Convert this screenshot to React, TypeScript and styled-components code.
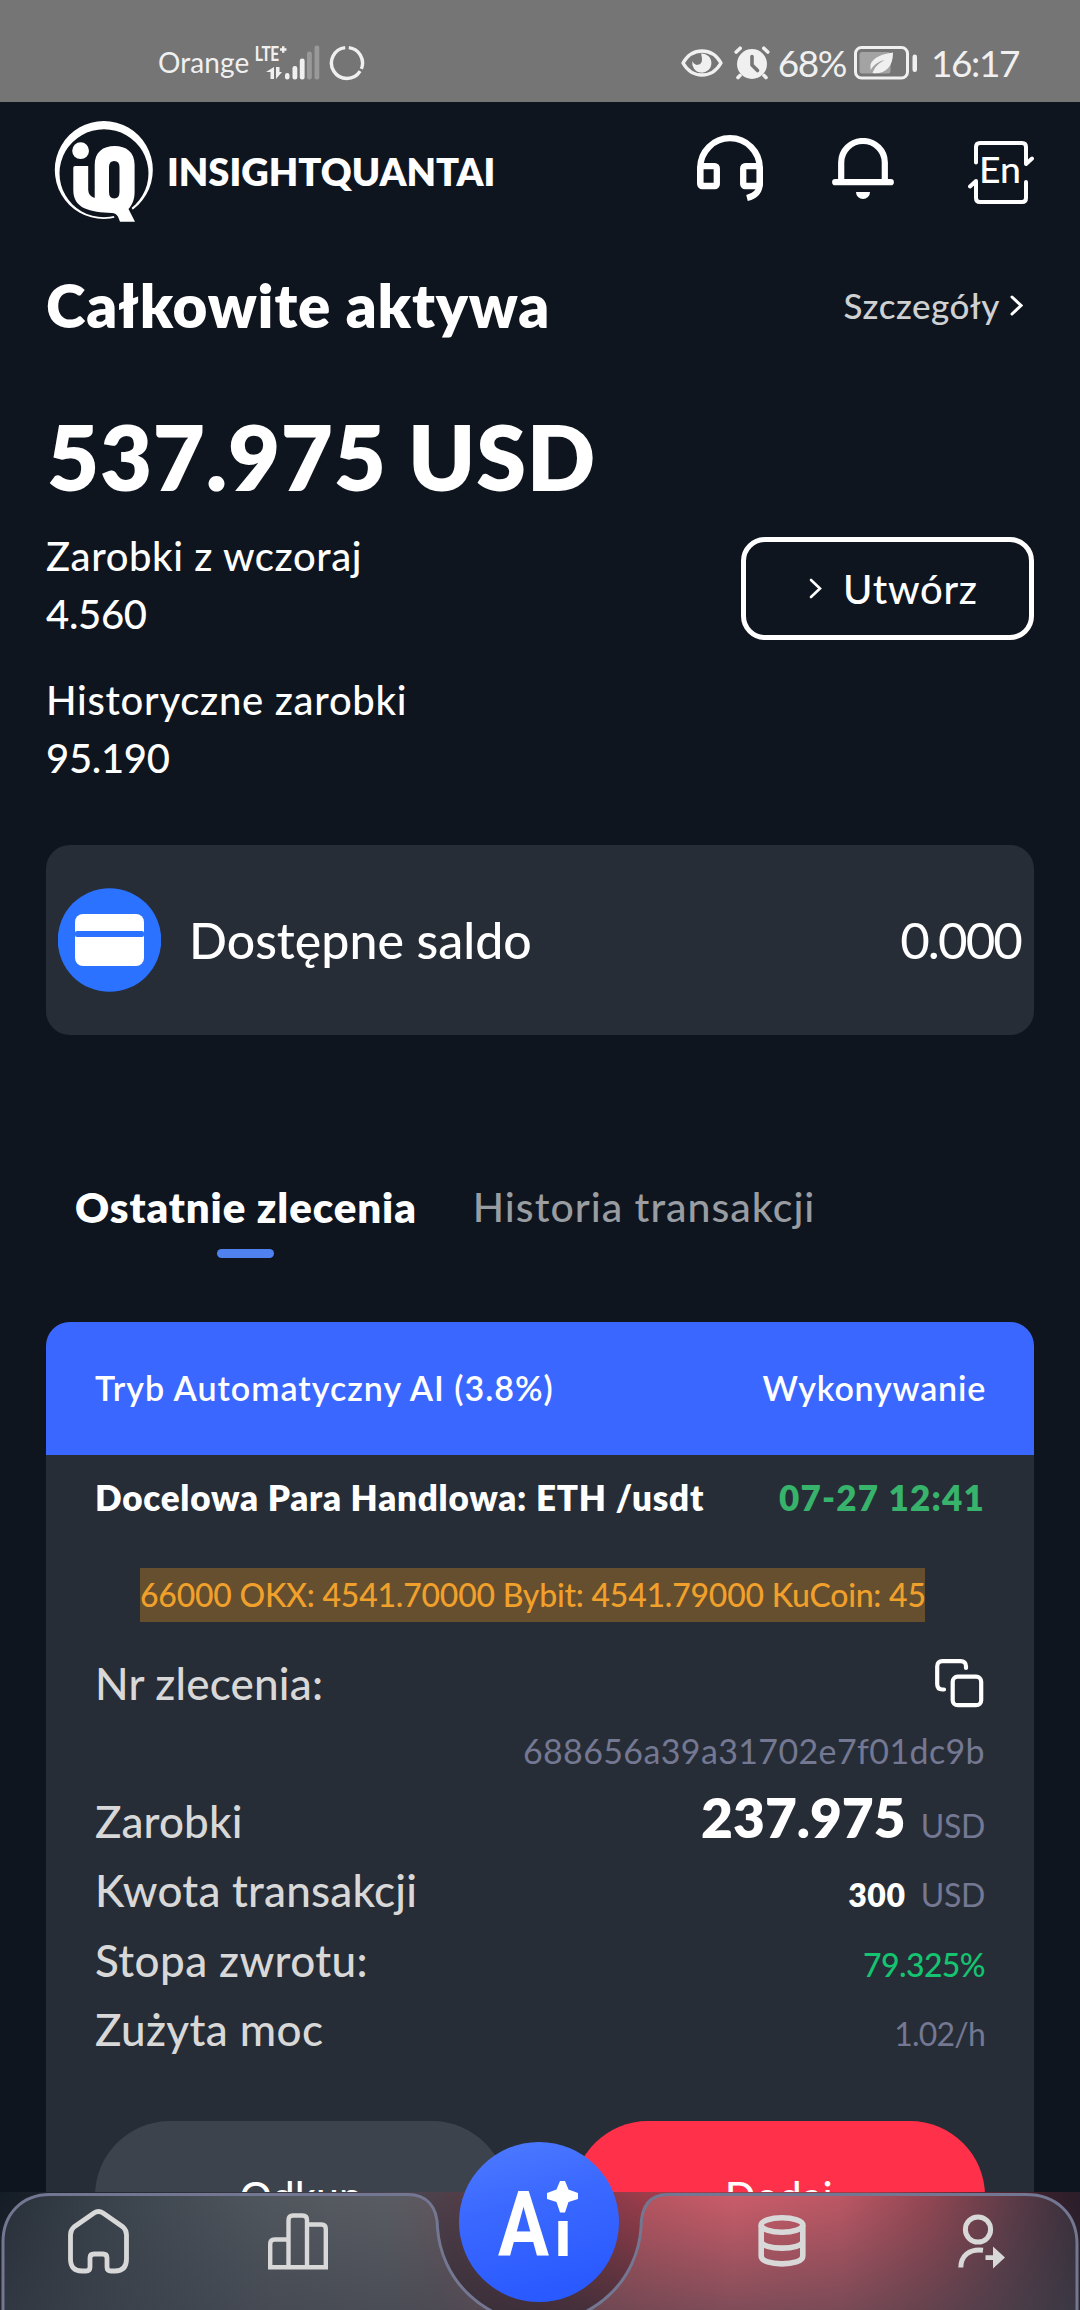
import React from "react";
import styled, { createGlobalStyle } from "styled-components";

const colors = {
  page: "#0e151f",
  card: "#272d36",
  text: "#ffffff",
  label: "#d8d8d8",
  muted: "#747893",
  status: "#f0f0f0",
  blue: "#3a67ff",
  red: "#ff314a",
};

const GlobalStyle = createGlobalStyle`
  *, *::before, *::after { box-sizing: border-box; }
  body { margin: 0; background: ${colors.page}; }
  svg { display: block; flex: none; }
`;

const Screen = styled.div`
  position: relative;
  width: 1080px;
  height: 2310px;
  overflow: hidden;
  background: ${colors.page};
  color: ${colors.text};
  font-family: Lato, "Noto Sans", sans-serif;
  white-space: nowrap;
`;

const Text = styled.span<{
  $size: number;
  $weight?: number;
  $spacing?: number;
  $color?: string;
}>`
  font-size: ${(p) => p.$size}px;
  font-weight: ${(p) => p.$weight ?? 500};
  letter-spacing: ${(p) => p.$spacing ?? 0}px;
  color: ${(p) => p.$color ?? colors.text};
  line-height: 1.2;
`;

/* ---------- status bar ---------- */

const StatusBar = styled.div`
  display: flex;
  justify-content: space-between;
  height: 102px;
  padding: 24px 61px 0 158px;
  background: #757575;
`;

const StatusGroup = styled.div<{ $gap: number }>`
  display: flex;
  align-items: center;
  height: 78px;
  gap: ${(p) => p.$gap}px;
`;

const StatusNumber = styled(Text)`
  padding-top: 1px;
`;

const SignalSlot = styled.div`
  margin-top: -12px;
`;

const AlarmSlot = styled.div`
  margin: 0 8px 0 11px;
`;

const BatterySlot = styled.div`
  margin: 0 13px 0 8px;
`;

/* ---------- header ---------- */

const Header = styled.header`
  display: flex;
  align-items: center;
  justify-content: space-between;
  height: 140px;
  padding: 0 51px 0 54px;
`;

const Brand = styled.div`
  display: flex;
  align-items: center;
  gap: 9px;
`;

const HeaderActions = styled.div`
  display: grid;
  grid-template-columns: 66px 62px 66px;
  align-items: center;
  column-gap: 69px;
  padding-bottom: 7px;

  svg:last-child {
    margin: 8px 0 0 5px;
  }
`;

/* ---------- summary ---------- */

const Content = styled.main`
  display: flex;
  flex-direction: column;
  padding: 0 46px;
`;

const TitleRow = styled.div`
  display: flex;
  align-items: center;
  justify-content: space-between;
  height: 124px;
  padding: 2px 11px 0 0;
`;

const DetailsLink = styled.div`
  display: flex;
  align-items: center;
  gap: 10px;
`;

const Amount = styled.div`
  display: flex;
  align-items: center;
  height: 110px;
  margin-top: 35px;
  padding: 0 0 0 1px;
`;

const StatsRow = styled.div`
  display: flex;
  justify-content: space-between;
  align-items: flex-start;
  height: 260px;
  margin-top: 15px;
`;

const Stats = styled.div`
  display: flex;
  flex-direction: column;
  gap: 28px;
  padding-top: 1px;
`;

const Stat = styled.div`
  display: flex;
  flex-direction: column;

  ${Text} {
    line-height: 58px;
  }
`;

const CreateButton = styled.button`
  display: flex;
  align-items: center;
  gap: 21px;
  width: 293px;
  height: 103px;
  margin: 11px 0 0;
  padding: 0 0 0 63px;
  border: 5px solid #fff;
  border-radius: 24px;
  background: none;
  font-family: inherit;
`;

const BalanceCard = styled.section`
  display: flex;
  align-items: center;
  height: 190px;
  margin-top: 59px;
  padding: 0 13px 0 12px;
  border-radius: 24px;
  background: ${colors.card};
`;

const BalanceLabel = styled(Text)`
  flex: 1;
  margin-left: 28px;
`;

/* ---------- tabs ---------- */

const Tabs = styled.nav`
  display: flex;
  gap: 56px;
  height: 82px;
  margin-top: 141px;
  padding-left: 29px;
`;

const Tab = styled.div<{ $active?: boolean }>`
  display: flex;
  flex-direction: column;
  align-items: center;

  ${Text} {
    line-height: 62px;
  }

  &::after {
    content: "";
    width: 57px;
    height: 9px;
    margin-top: 11px;
    border-radius: 5px;
    background: ${(p) => (p.$active ? "#4f82ef" : "transparent")};
  }
`;

/* ---------- order card ---------- */

const OrderCard = styled.article`
  display: flex;
  flex-direction: column;
  height: 1040px;
  margin-top: 64px;
  border-radius: 24px;
  background: ${colors.card};
  overflow: hidden;
`;

const OrderHeader = styled.div`
  display: flex;
  align-items: center;
  justify-content: space-between;
  height: 133px;
  padding: 0 48px 0 49px;
  background: ${colors.blue};
`;

const PairRow = styled.div`
  display: flex;
  align-items: center;
  justify-content: space-between;
  height: 84px;
  padding: 0 49px;
`;

const Ticker = styled.div`
  width: 785px;
  height: 54px;
  margin: 29px 0 0 94px;
  background: #654f2e;
  overflow: hidden;

  ${Text} {
    line-height: 53px;
  }
`;

const NumberRow = styled.div`
  display: flex;
  align-items: center;
  justify-content: space-between;
  height: 60px;
  margin-top: 31px;
  padding: 0 50px 0 49px;
`;

const OrderId = styled.div`
  display: flex;
  align-items: center;
  justify-content: flex-end;
  height: 73.5px;
  padding: 4px 49px 0;
`;

const DataRow = styled.div`
  display: flex;
  align-items: baseline;
  justify-content: space-between;
  height: 69.5px;
  padding: 0 49px;

  > ${Text}:first-child {
    line-height: 69.5px;
  }
`;

const Value = styled.div`
  display: flex;
  align-items: baseline;
  gap: 15px;

  ${Text} {
    line-height: 1;
  }
`;

const Actions = styled.div`
  display: flex;
  gap: 66px;
  margin-top: 56.5px;
  padding: 0 49px;
`;

const ActionButton = styled.button<{ $bg: string }>`
  flex: 1;
  height: 150px;
  padding: 0;
  border: 0;
  border-radius: 75px;
  background: ${(p) => p.$bg};
  font-family: inherit;
`;

/* ---------- bottom navigation ---------- */

const BottomNav = styled.nav`
  position: absolute;
  left: 0;
  bottom: 0;
  width: 1080px;
  height: 118px;
`;

const NavBackdrop = styled.svg`
  position: absolute;
  inset: 0;
`;

const NavItems = styled.div`
  position: relative;
  display: grid;
  grid-template-columns: 197px 202px 280px 206px 193px;
  grid-template-rows: 98px;
  align-items: center;
  justify-items: center;
`;

const AiButton = styled.div`
  display: flex;
  width: 160px;
  height: 160px;
  margin-top: -38px;
  border-radius: 50%;
  background: linear-gradient(165deg, #4f7bff 0%, #3a68ff 40%, #2556ff 100%);
`;

/* ---------- icons ---------- */

const SignalIcon = () => (
  <svg width="68" height="48" viewBox="0 -12 68 48" fill={colors.status}>
    <text x="0" y="16" fontSize="21" fontWeight="700" fontFamily="Roboto, sans-serif" textLength="24" lengthAdjust="spacingAndGlyphs">LTE</text>
    <path d="M25 4.500h6.500M28.200 1.200v6.600" stroke={colors.status} strokeWidth="2.400" />
    <path d="M19 22v12h-3.500v-7h-4.500z M21 22v12l6-7h-2.500v-5z" />
    <rect x="30" y="28" width="4.500" height="6.500" rx="2.200" />
    <rect x="37.500" y="21" width="4.800" height="13.500" rx="2.200" />
    <rect x="44.800" y="13.500" width="4.800" height="21" rx="2.200" />
    <rect x="52" y="6.500" width="4.800" height="28" rx="2.200" opacity=".3" />
    <rect x="59.500" y="0.500" width="4.800" height="34" rx="2.200" opacity=".3" />
  </svg>
);

const RingIcon = () => (
  <svg width="36" height="36" viewBox="-18 -18 36 36" fill="none" stroke={colors.status} strokeWidth="3.400">
    <path d="M1.800 -15.400A15.500 15.500 0 0 1 14.400 5.800M13.100 8.200A15.500 15.500 0 1 1 -1.800 -15.400" />
  </svg>
);

const EyeIcon = () => (
  <svg width="42" height="28" viewBox="0 0 42 28">
    <path d="M2 14C6 7 13 2 21 2s15 5 19 12c-4 7-11 12-19 12S6 21 2 14Z" fill="none" stroke={colors.status} strokeWidth="3.400" strokeLinejoin="round" />
    <path d="M20 4.500a9.600 9.600 0 1 1-8.600 7.600c1 2.600 3.200 4.200 5.400 3.700c3-.6 4.400-2.600 4.200-5.600c-.1-2.400-.5-4.200-1-5.700Z" fill={colors.status} />
  </svg>
);

const AlarmIcon = () => (
  <svg width="36" height="34" viewBox="0 0 36 34" fill="none" stroke={colors.status} strokeLinecap="round">
    <circle cx="18" cy="18" r="15" fill={colors.status} stroke="none" />
    <path d="M2.200 6l4-3.800M33.800 6l-4-3.800M6 29.500l-2 2M30 29.500l2 2" strokeWidth="3.600" />
    <path d="M18 10.500v8.500l5.500 5.500" stroke="#757575" strokeWidth="3.600" strokeLinejoin="round" />
  </svg>
);

const BatteryIcon = () => (
  <svg width="64" height="34" viewBox="0 0 64 34">
    <rect x="1.500" y="1.500" width="52" height="30.500" rx="6" fill="none" stroke={colors.status} strokeWidth="3" />
    <rect x="5.500" y="6" width="31" height="21.500" rx="2.500" fill="#a3a3a3" />
    <rect x="58.500" y="8.500" width="4.500" height="17.500" rx="2.200" fill={colors.status} />
    <path d="M39 6.500c-11 1.500-20 5-22.500 12v5.500c4-6 8.500-8.500 14-10c-5.500 3-9.500 6.500-12 13c12 1.500 20.500-5 20.500-20.500Z" fill={colors.status} />
  </svg>
);

const LogoIcon = () => (
  <svg width="104" height="104" viewBox="0 0 104 104" fill="#fff" fillRule="evenodd">
    <path d="M49.800 1a49 49 0 1 0 .01 0ZM50 9.300a44.500 44 0 1 1-.01 0Z" />
    <path d="M60 88h15l9 14H64Z" fill={colors.page} stroke={colors.page} strokeWidth="4.500" />
    <circle cx="26.600" cy="30.700" r="8.400" />
    <path d="M21 46H34.200V70Q34.500 76 40.700 78V45C40.700 32 49 26 60.600 26S80.600 32 80.600 45V72C80.600 80 78 85 74.500 89L81 101.700H66C64 96 63 93.500 58 93C36 92 19.300 89 19.300 70V47.700Q19.300 46 21 46ZM60.200 41Q55 41 55 47V72Q55 78.500 60.200 78.500T65.500 72V47Q65.500 41 60.200 41Z" />
  </svg>
);

const HeadsetIcon = () => (
  <svg width="66" height="67" viewBox="0 0 66 67" fill="none" stroke="#fff" strokeWidth="6.300">
    <path d="M3.200 48V33A29.800 29.800 0 0 1 62.800 33V48" />
    <rect x="3.200" y="31.200" width="16.600" height="19.800" rx="2" />
    <rect x="46.200" y="31.200" width="16.600" height="19.800" rx="2" />
    <path d="M62.800 48C62.800 57 58 61 50 63" />
  </svg>
);

const BellIcon = () => (
  <svg width="62" height="62" viewBox="0 0 62 62" fill="none" stroke="#fff" strokeWidth="6.200" strokeLinecap="round">
    <path d="M9.200 44V24.500A21.800 21.500 0 0 1 52.800 24.500V44M3.200 44.200H58.800" />
    <path d="M24 54H38A7 7 0 0 1 24 54Z" fill="#fff" stroke="none" />
  </svg>
);

const LanguageIcon = () => (
  <svg width="66" height="64" viewBox="0 0 66 64" fill="none" stroke="#fff" strokeWidth="4" strokeLinecap="round" strokeLinejoin="round">
    <path d="M8 21.500V6Q8 2 12 2H54Q58 2 58 6V23L64 17.500" />
    <path d="M58 41V57Q58 61 54 61H12Q8 61 8 57V40L2 45.500" />
    <text x="11" y="42" fontSize="37" fontWeight="500" fill="#fff" stroke="none" textLength="42" lengthAdjust="spacingAndGlyphs">En</text>
  </svg>
);

const Chevron = ({ width, height, stroke = 3 }: { width: number; height: number; stroke?: number }) => (
  <svg width={width} height={height} viewBox={`0 0 ${width} ${height}`} fill="none" stroke="#fff" strokeWidth={stroke} strokeLinecap="round">
    <path d={`M2 2L${width - 2} ${height / 2}L2 ${height - 2}`} />
  </svg>
);

const WalletIcon = () => (
  <svg width="103" height="104" viewBox="0 0 103 104">
    <circle cx="51.500" cy="52" r="51.800" fill="#2a72ff" />
    <rect x="17" y="26" width="69" height="52" rx="8" fill="#fff" />
    <rect x="17" y="43" width="69" height="6" rx="2" fill="#2a72ff" />
  </svg>
);

const CopyIcon = () => (
  <svg width="49" height="49" viewBox="0 0 49 49" fill="none" stroke="#fff" strokeWidth="4.200" strokeLinecap="round">
    <path d="M31 9V7.500Q31 2.200 25.500 2.200H7.500Q2.200 2.200 2.200 7.500V25Q2.200 30.500 7.500 30.500H9" />
    <rect x="17.700" y="17.700" width="28.500" height="28.500" rx="5" />
  </svg>
);

const HomeIcon = () => (
  <svg width="61" height="65" viewBox="0 0 61 65" fill="none" stroke={colors.label} strokeWidth="4.800">
    <path d="M26 4Q30.500 1 35 4L55 18Q58.500 21 58.500 26V50Q58.500 62 47 62H43Q39 62 39 58V49Q39 45 35 45H26Q22 45 22 49V58Q22 62 18 62H14Q2.500 62 2.500 50V26Q2.500 21 6 18Z" />
  </svg>
);

const ChartIcon = () => (
  <svg width="60" height="57" viewBox="0 0 60 57" fill="none" stroke={colors.label} strokeWidth="4.400">
    <path d="M2.200 54.300V31Q2.200 26.500 6.500 26.500H20.500M20.500 54.300V7Q20.500 2.500 25 2.500H34.500Q39 2.500 39 7V54.300M39 11.500H53.500Q57.800 11.500 57.800 16V54.300M0 54.300H60" />
  </svg>
);

const DatabaseIcon = () => (
  <svg width="48" height="52" viewBox="0 0 48 52" fill="none" stroke={colors.label} strokeWidth="5.600">
    <ellipse cx="24" cy="10" rx="20.800" ry="7.200" />
    <path d="M3.200 10V41C3.200 51.500 44.800 51.500 44.800 41V10M3.200 26C3.200 35.500 44.800 35.500 44.800 26" />
  </svg>
);

const UserIcon = () => (
  <svg width="48" height="55" viewBox="0 0 48 55" fill="none" stroke={colors.label} strokeWidth="5">
    <circle cx="20" cy="15.500" r="12.600" />
    <path d="M2.800 53.500C3 42 11 34.500 25 36.200" />
    <path d="M27.500 41.200H35V32.500L47 43.500L35 54.500V46H27.500Z" fill={colors.label} stroke="none" />
  </svg>
);

const AiIcon = () => (
  <svg width="160" height="160" viewBox="0 0 160 160" fill="#fff">
    <text x="39" y="114" fontSize="90" fontWeight="700" fontFamily="Roboto, sans-serif" textLength="51" lengthAdjust="spacingAndGlyphs">A</text>
    <text x="95" y="114" fontSize="66" fontWeight="700" fontFamily="Roboto, sans-serif">ı</text>
    <path d="M101 39h5l3.500 8.500 9.500 3.500v6l-9.500 3-3.500 10.500h-5l-3.500-10.500-9.500-3v-6l9.500-3.500z" />
  </svg>
);

const navShape =
  "M3 122V50C3 22 22 2.500 50 2.500H408C426 2.500 437.500 14 437.500 36A102 102 0 0 0 641 36C641 14 650 2.500 668 2.500H1026C1056 2.500 1077 22 1077 52V122Z";

const NavSurface = () => (
  <NavBackdrop width="1080" height="118" viewBox="0 0 1080 118">
    <defs>
      <linearGradient id="base">
        <stop offset="0" stopColor="#141c26" />
        <stop offset=".05" stopColor="#1c242e" />
        <stop offset=".38" stopColor="#4b4550" />
        <stop offset=".42" stopColor="#513e48" />
        <stop offset=".5" stopColor="#6c3a46" />
        <stop offset=".6" stopColor="#a03d4b" />
        <stop offset=".8" stopColor="#a03c48" />
        <stop offset=".97" stopColor="#371f2c" />
        <stop offset="1" stopColor="#2b1d29" />
      </linearGradient>
      <linearGradient id="surface">
        <stop offset="0" stopColor="#28303a" />
        <stop offset=".1" stopColor="#3a434c" />
        <stop offset=".25" stopColor="#51575e" />
        <stop offset=".36" stopColor="#5a5c63" />
        <stop offset=".41" stopColor="#61565e" />
        <stop offset=".59" stopColor="#b5545f" />
        <stop offset=".68" stopColor="#cb5c69" />
        <stop offset=".78" stopColor="#bd5764" />
        <stop offset=".86" stopColor="#934753" />
        <stop offset=".94" stopColor="#5c3b47" />
        <stop offset="1" stopColor="#382f3b" />
      </linearGradient>
      <linearGradient id="shadeBase" x2="0" y2="1">
        <stop offset="0" stopColor="#2e2b35" stopOpacity="0" />
        <stop offset="1" stopColor="#2e2b35" stopOpacity=".72" />
      </linearGradient>
      <linearGradient id="shadeSurface" x2="0" y2="1">
        <stop offset="0" stopColor="#3b3f4a" stopOpacity="0" />
        <stop offset="1" stopColor="#3b3f4a" stopOpacity=".58" />
      </linearGradient>
    </defs>
    <rect width="1080" height="118" fill="url(#base)" />
    <rect width="1080" height="118" fill="url(#shadeBase)" />
    <path d={navShape} fill="url(#surface)" />
    <path d={navShape} fill="url(#shadeSurface)" stroke="#747792" strokeWidth="3" />
  </NavBackdrop>
);

export default function App() {
  return (
    <Screen>
      <GlobalStyle />
      <StatusBar>
        <StatusGroup $gap={6}>
          <Text $size={28} $weight={400} $color={colors.status} $spacing={0.1}>Orange</Text>
          <SignalSlot>
            <SignalIcon />
          </SignalSlot>
          <RingIcon />
        </StatusGroup>
        <StatusGroup $gap={0}>
          <EyeIcon />
          <AlarmSlot>
            <AlarmIcon />
          </AlarmSlot>
          <StatusNumber $size={37} $weight={400} $color={colors.status} $spacing={-1.5}>68%</StatusNumber>
          <BatterySlot>
            <BatteryIcon />
          </BatterySlot>
          <StatusNumber $size={37} $weight={400} $color={colors.status} $spacing={-1.4}>16:17</StatusNumber>
        </StatusGroup>
      </StatusBar>

      <Header>
        <Brand>
          <LogoIcon />
          <Text $size={38} $weight={800}>INSIGHTQUANTAI</Text>
        </Brand>
        <HeaderActions>
          <HeadsetIcon />
          <BellIcon />
          <LanguageIcon />
        </HeaderActions>
      </Header>

      <Content>
        <TitleRow>
          <Text $size={60} $weight={800} $spacing={0.8}>Całkowite aktywa</Text>
          <DetailsLink>
            <Text $size={35} $spacing={0.5} $color="#cfd0d2">Szczegóły</Text>
            <Chevron width={13} height={21} />
          </DetailsLink>
        </TitleRow>

        <Amount>
          <Text $size={90} $weight={800} $spacing={0.7}>537.975 USD</Text>
        </Amount>

        <StatsRow>
          <Stats>
            <Stat>
              <Text $size={40} $spacing={0.6}>Zarobki z wczoraj</Text>
              <Text $size={40} $spacing={-0.3}>4.560</Text>
            </Stat>
            <Stat>
              <Text $size={40} $spacing={0.7}>Historyczne zarobki</Text>
              <Text $size={40} $spacing={-0.3}>95.190</Text>
            </Stat>
          </Stats>
          <CreateButton>
            <Chevron width={13} height={21} stroke={2.6} />
            <Text $size={40} $spacing={0.7}>Utwórz</Text>
          </CreateButton>
        </StatsRow>

        <BalanceCard>
          <WalletIcon />
          <BalanceLabel $size={50}>Dostępne saldo</BalanceLabel>
          <Text $size={51} $weight={400} $spacing={-1.9}>0.000</Text>
        </BalanceCard>

        <Tabs>
          <Tab $active>
            <Text $size={42} $weight={800} $spacing={0.9}>Ostatnie zlecenia</Text>
          </Tab>
          <Tab>
            <Text $size={41} $spacing={1} $color="#999ca1">Historia transakcji</Text>
          </Tab>
        </Tabs>

        <OrderCard>
          <OrderHeader>
            <Text $size={34} $weight={600} $spacing={1}>Tryb Automatyczny AI (3.8%)</Text>
            <Text $size={34} $weight={600} $spacing={0.8}>Wykonywanie</Text>
          </OrderHeader>
          <PairRow>
            <Text $size={35} $weight={800} $spacing={0.74}>Docelowa Para Handlowa: ETH /usdt</Text>
            <Text $size={35} $weight={800} $spacing={1.2} $color="#37b36b">07-27 12:41</Text>
          </PairRow>
          <Ticker>
            <Text $size={32} $spacing={-0.23} $color="#f0a02b">66000 OKX: 4541.70000 Bybit: 4541.79000 KuCoin: 45</Text>
          </Ticker>
          <NumberRow>
            <Text $size={44} $spacing={0.2} $color={colors.label}>Nr zlecenia:</Text>
            <CopyIcon />
          </NumberRow>
          <OrderId>
            <Text $size={34} $weight={400} $spacing={0.37} $color={colors.muted}>688656a39a31702e7f01dc9b</Text>
          </OrderId>
          <DataRow>
            <Text $size={44} $spacing={0.1} $color={colors.label}>Zarobki</Text>
            <Value>
              <Text $size={55} $weight={800}>237.975</Text>
              <Text $size={32} $weight={400} $spacing={-0.3} $color={colors.muted}>USD</Text>
            </Value>
          </DataRow>
          <DataRow>
            <Text $size={44} $spacing={0.2} $color={colors.label}>Kwota transakcji</Text>
            <Value>
              <Text $size={32} $weight={800} $spacing={0.6}>300</Text>
              <Text $size={32} $weight={400} $spacing={-0.3} $color={colors.muted}>USD</Text>
            </Value>
          </DataRow>
          <DataRow>
            <Text $size={44} $spacing={0.4} $color={colors.label}>Stopa zwrotu:</Text>
            <Value>
              <Text $size={32} $spacing={-0.6} $color="#14c471">79.325%</Text>
            </Value>
          </DataRow>
          <DataRow>
            <Text $size={44} $spacing={0.4} $color={colors.label}>Zużyta moc</Text>
            <Value>
              <Text $size={32} $weight={400} $spacing={-0.8} $color={colors.muted}>1.02/h</Text>
            </Value>
          </DataRow>
          <Actions>
            <ActionButton $bg="#3d434c">
              <Text $size={40} $spacing={0.6}>Odkup</Text>
            </ActionButton>
            <ActionButton $bg={colors.red}>
              <Text $size={40} $spacing={0.6}>Dodaj</Text>
            </ActionButton>
          </Actions>
        </OrderCard>
      </Content>

      <BottomNav>
        <NavSurface />
        <NavItems>
          <HomeIcon />
          <ChartIcon />
          <AiButton>
            <AiIcon />
          </AiButton>
          <DatabaseIcon />
          <UserIcon />
        </NavItems>
      </BottomNav>
    </Screen>
  );
}
